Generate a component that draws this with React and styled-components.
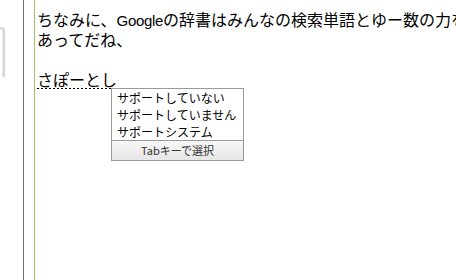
import React from "react";
import styled, { createGlobalStyle } from "styled-components";

const Global = createGlobalStyle`
  html, body {
    margin: 0;
    padding: 0;
    background: #fff;
    overflow: hidden;
  }
  body {
    font-family: "Noto Sans CJK JP", "Noto Sans", sans-serif;
  }
`;

const Page = styled.div`
  display: flex;
  width: 456px;
  height: 280px;
  overflow: hidden;
`;

const Gutter = styled.div`
  width: 23px;
  flex: none;
  border-right: 1px solid #6f6f78;
`;

const GutterKnob = styled.div`
  width: 3px;
  height: 48px;
  margin-top: 27px;
  border: 2px solid #d4d4d4;
  border-left: none;
  border-bottom: none;
  border-top-right-radius: 4px;
  box-shadow: inset -1px 0 0 #ececec;
`;

const Spacer = styled.div`
  width: 10px;
  flex: none;
  border-right: 1px solid #a7c06f;
`;

const Editor = styled.div`
  position: relative;
  flex: 1;
  min-width: 0;
  padding: 9px 0 0 2px;
  font-size: 16px;
  line-height: 20px;
  color: #000;
`;

const Line = styled.div`
  height: 20px;
  white-space: nowrap;
`;

const Latin = styled.span`
  font-family: "Liberation Sans", sans-serif;
  font-size: 15px;
  letter-spacing: -0.3px;
`;

const Composition = styled.span`
  display: inline-block;
  height: 20px;
  background-image: linear-gradient(to right, #000 50%, transparent 50%);
  background-size: 4px 1px;
  background-repeat: repeat-x;
  background-position: 0 19px;
`;

const Candidates = styled.div`
  position: absolute;
  left: 76px;
  top: 88px;
  width: 131px;
  border: 1px solid #9a9a9a;
  background: #fff;
  display: flex;
  flex-direction: column;
`;

const Candidate = styled.div`
  height: 17px;
  padding-left: 5px;
  font-size: 12px;
  line-height: 17px;
  white-space: nowrap;
  color: #000;
`;

const Hint = styled.div`
  height: 19px;
  border-top: 1px solid #9a9a9a;
  background: linear-gradient(#f7f7f7, #e6e6e6);
  text-align: center;
  font-size: 11px;
  line-height: 19px;
  color: #333;
`;

const candidates = ["サポートしていない", "サポートしていません", "サポートシステム"];

export default function App() {
  return (
    <>
      <Global />
      <Page>
        <Gutter>
          <GutterKnob />
        </Gutter>
        <Spacer />
        <Editor>
          <Line>
            ちなみに、<Latin>Google</Latin>の辞書はみんなの検索単語とゆー数の力を
          </Line>
          <Line>あってだね、</Line>
          <Line />
          <Line>
            <Composition>さぽーとし</Composition>
          </Line>
          <Candidates>
            {candidates.map((c) => (
              <Candidate key={c}>{c}</Candidate>
            ))}
            <Hint>Tabキーで選択</Hint>
          </Candidates>
        </Editor>
      </Page>
    </>
  );
}
